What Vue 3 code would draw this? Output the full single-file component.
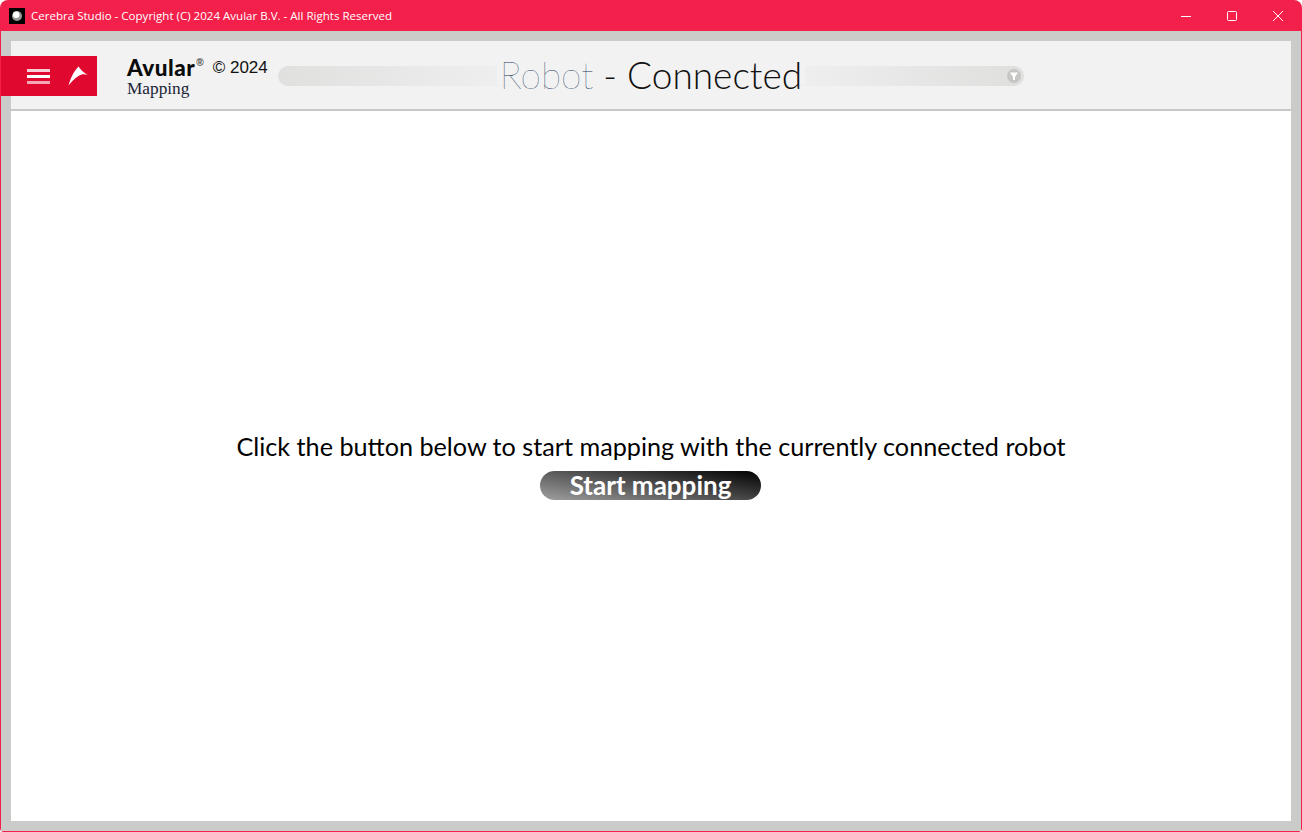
<script setup>
const titleText = 'Cerebra Studio - Copyright (C) 2024 Avular B.V. - All Rights Reserved'
</script>

<template>
  <div class="window">
    <div class="titlebar">
      <div class="title-left">
        <span class="app-icon">
          <svg width="16" height="16" viewBox="0 0 16 16">
            <rect width="16" height="16" fill="#000" />
            <circle cx="8" cy="8" r="5" fill="#9a9a9a" />
            <circle cx="7.200" cy="6.800" r="3.200" fill="#fff" />
          </svg>
        </span>
        <span class="title-text">{{ titleText }}</span>
      </div>
      <div class="win-controls">
        <span class="win-btn">
          <svg width="12" height="12" viewBox="0 0 12 12"><path d="M1 6.500H11" stroke="#fff" fill="none" /></svg>
        </span>
        <span class="win-btn">
          <svg width="12" height="12" viewBox="0 0 12 12"><rect x="1.500" y="1.500" width="9" height="9" rx="1" stroke="#fff" fill="none" /></svg>
        </span>
        <span class="win-btn">
          <svg width="12" height="12" viewBox="0 0 12 12"><path d="M1 1L11 11M11 1L1 11" stroke="#fff" fill="none" /></svg>
        </span>
      </div>
    </div>
    <div class="frame">
      <div class="card">
        <header class="header">
          <div class="tab">
            <span class="burger"><i></i><i></i><i></i></span>
            <svg class="arrow" width="20" height="20" viewBox="0 0 20 20">
              <path d="M0.500 19.500C2.500 13 5 6 10.500 0.500C12.500 3.500 15.500 6.500 19.500 9C16.500 8 13.500 8 10.500 10C6.500 12.500 3 16 0.500 19.500Z" fill="#fff" />
            </svg>
          </div>
          <div class="brand">
            <div class="brand-top">
              <span class="logo">Avular</span><sup class="reg">®</sup>
              <span class="copy">© 2024</span>
            </div>
            <div class="sub">Mapping</div>
          </div>
          <div class="status-bar">
            <span class="status"><span class="robot">Robot</span> - Connected</span>
            <span class="drop">
              <svg width="10" height="10" viewBox="0 0 10 10"><path d="M1 1.500H9L6 6V9H4V6Z" fill="#fff" /></svg>
            </span>
          </div>
        </header>
        <main class="content">
          <p class="hint">Click the button below to start mapping with the currently connected robot</p>
          <button class="start" type="button">Start mapping</button>
        </main>
      </div>
    </div>
  </div>
</template>

<style scoped>
.window {
  width: 1302px;
  height: 832px;
  box-sizing: border-box;
  display: flex;
  flex-direction: column;
  background: #f2204b;
  border-radius: 8px 8px 4px 4px;
  padding: 0 1px 1px;
  overflow: hidden;
}
.titlebar {
  height: 31px;
  flex: none;
  display: flex;
  justify-content: space-between;
  align-items: center;
  padding-left: 8px;
}
.title-left {
  display: flex;
  align-items: center;
  gap: 6px;
}
.app-icon {
  display: flex;
}
.title-text {
  color: #fff;
  font: 11.550px "Open Sans", "Noto Sans", sans-serif;
}
.win-controls {
  display: flex;
}
.win-btn {
  width: 46px;
  height: 31px;
  display: flex;
  align-items: center;
  justify-content: center;
}
.frame {
  flex: 1;
  background: #cbcbc9;
  padding: 10px;
  display: flex;
  min-height: 0;
}
.card {
  flex: 1;
  display: flex;
  flex-direction: column;
  background: #fff;
}
.header {
  height: 70px;
  box-sizing: border-box;
  flex: none;
  background: #f2f2f2;
  border-bottom: 2px solid #c8c8c8;
  padding-top: 2px;
  display: flex;
  align-items: center;
  position: relative;
}
.tab {
  position: absolute;
  left: -10px;
  top: 15px;
  width: 96px;
  height: 40px;
  background: #e0082f;
  display: flex;
  align-items: center;
  padding-left: 26px;
  box-sizing: border-box;
}
.burger {
  display: flex;
  flex-direction: column;
  gap: 3px;
  width: 23px;
}
.burger i {
  display: block;
  height: 3px;
  background: #fff;
  opacity: 0.8;
}
.burger i:nth-child(2) {
  opacity: 1;
}
.burger i:nth-child(3) {
  opacity: 0.65;
}
.arrow {
  margin-left: 18px;
  margin-top: -1px;
}
.brand {
  margin-left: 116px;
  margin-top: 2px;
  width: 151px;
  flex: none;
}
.brand-top {
  display: flex;
  align-items: flex-start;
  height: 24px;
}
.logo {
  font: 900 22.500px/24px Lato, sans-serif;
  color: #0b0b0b;
  letter-spacing: 0.500px;
}
.reg {
  font: 700 10px/14px "Liberation Sans", sans-serif;
  color: #444;
  margin-left: 1px;
}
.copy {
  font: 17px/24px "Liberation Sans", Arial, sans-serif;
  color: #111;
  margin-left: 9px;
}
.sub {
  font: 17.300px/18px "Liberation Serif", serif;
  color: #1a2438;
}
.status-bar {
  width: 746px;
  height: 20px;
  flex: none;
  border-radius: 10px;
  background: linear-gradient(90deg, #e0e0df 0%, #eeeeee 29%, #f2f2f2 50%, #eeeeee 71%, #dfdfde 100%);
  display: flex;
  align-items: center;
  justify-content: center;
  position: relative;
}
.status {
  font: 300 37px/20px Lato, sans-serif;
  color: #111;
  white-space: nowrap;
  background: #f2f2f2;
  padding: 0 3px;
  margin-top: -2px;
}
.robot {
  color: #16385a;
  font-weight: 100;
}
.drop {
  position: absolute;
  right: 3px;
  top: 3px;
  width: 14px;
  height: 14px;
  border-radius: 50%;
  background: #c6c6c5;
  display: flex;
  align-items: center;
  justify-content: center;
}
.content {
  flex: 1;
  display: flex;
  flex-direction: column;
  align-items: center;
  padding-top: 319px;
  box-sizing: border-box;
}
.hint {
  margin: 0;
  font: 400 25.200px/32px Lato, sans-serif;
  color: #000;
}
.start {
  margin-top: 9px;
  margin-right: 1px;
  width: 221px;
  height: 29px;
  border: 0;
  border-radius: 15px;
  background: linear-gradient(10deg, #a0a0a0 0%, #000 100%);
  color: #fff;
  font: 700 26px/29px Lato, sans-serif;
  padding: 0;
}
</style>

<style>
html, body {
  margin: 0;
  background: #fff;
}
</style>
